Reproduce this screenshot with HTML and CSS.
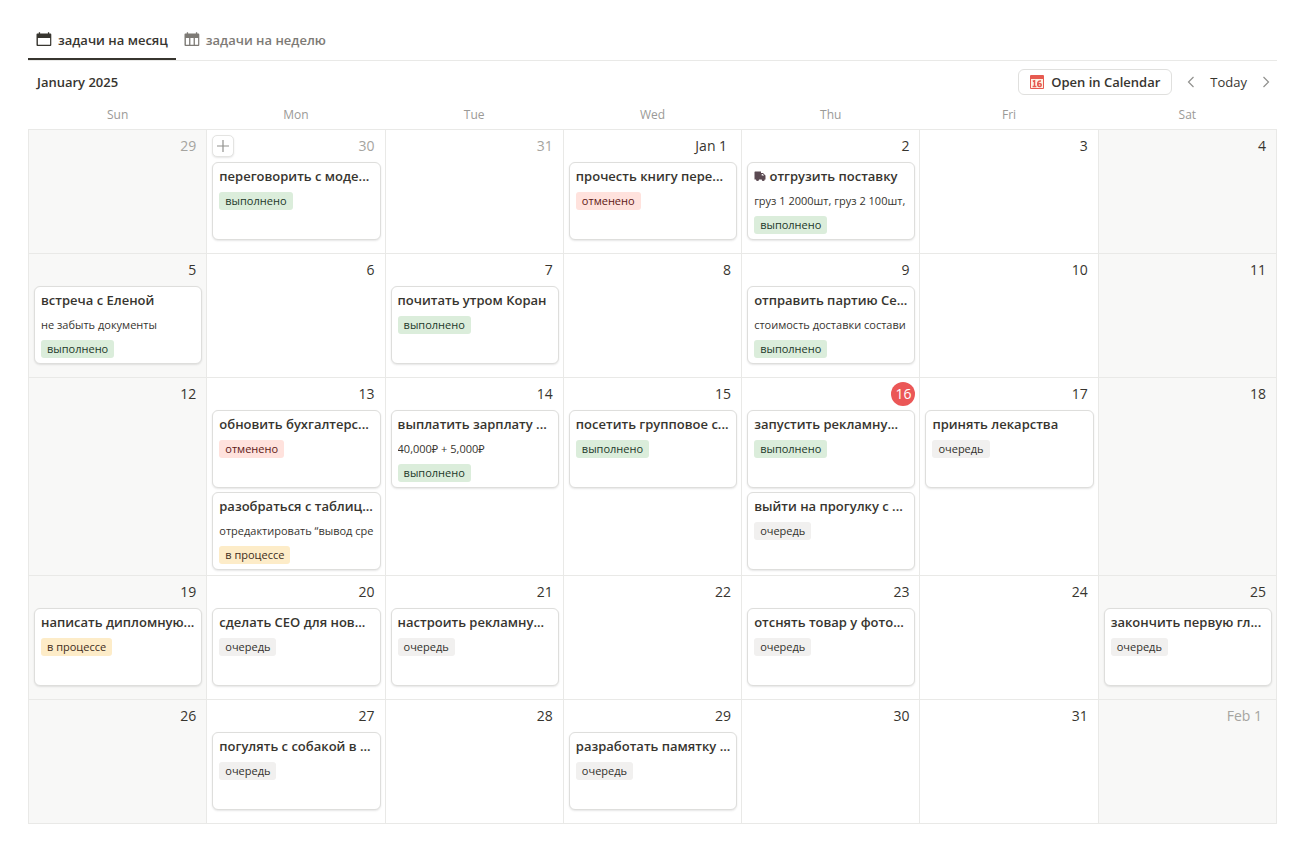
FILE: index.html
```
<!DOCTYPE html>
<html lang="ru">
<head>
    <meta charset="UTF-8">
    <meta name="viewport" content="width=device-width, initial-scale=1">
    <title>задачи на месяц</title>
    <link rel="stylesheet" href="styles.css">
</head>
<body>
    <nav class="tabs">
        <a href="#" class="tab active">
            <svg width="16" height="16" viewBox="0 0 16 16"><path fill="currentColor" fill-rule="evenodd" d="M2.800.3h1.300v1.300h7.800V.3h1.300v1.300h1.200q.9 0 .9.900v10.600q0 .9-.9.900H1.400q-.9 0-.9-.9V2.500q0-.9.9-.9h1.400zM1.900 6v6.200q0 .6.600.6h11q.6 0 .6-.6V6z"/></svg>
            задачи на месяц
        </a>
        <a href="#" class="tab">
            <svg width="16" height="16" viewBox="0 0 16 16"><path fill="currentColor" fill-rule="evenodd" d="M2.800.3h1.300v1.300h7.800V.3h1.300v1.300h1.200q.9 0 .9.900v10.600q0 .9-.9.900H1.400q-.9 0-.9-.9V2.500q0-.9.9-.9h1.400zM1.900 6v6.800h3.200V6zM6.400 6v6.800h3.200V6zM10.900 6v6.800h3.200V6z"/></svg>
            задачи на неделю
        </a>
    </nav>

    <header class="toolbar">
        <h2 class="month">January 2025</h2>
        <div class="controls">
            <button class="open-btn">
                <svg width="14" height="14" viewBox="0 0 14 14"><rect width="14" height="14" rx="1" fill="#e65a50"/><path fill="#fdf3e4" d="M1 4h12v9H1z"/><path fill="none" stroke="#e65a50" stroke-width="1.500" d="M2.800 6.300l1.700-.6v5.800M2.600 11.500h3.800M11 6q-3.300-.5-3.300 3 0 2.500 1.800 2.500T11.200 9.900q0-1.400-1.600-1.400T7.900 9.600"/></svg>
                Open in Calendar
            </button>
            <button class="nav-btn" aria-label="Previous month"><svg width="14" height="14" viewBox="0 0 14 14"><path d="M9.500 2L4.500 7l5 5"/></svg></button>
            <button class="today-btn">Today</button>
            <button class="nav-btn" aria-label="Next month"><svg width="14" height="14" viewBox="0 0 14 14"><path d="M4.500 2l5 5-5 5"/></svg></button>
        </div>
    </header>

    <table class="calendar">
        <thead>
            <tr><th>Sun</th><th>Mon</th><th>Tue</th><th>Wed</th><th>Thu</th><th>Fri</th><th>Sat</th></tr>
        </thead>
        <tbody>
            <tr>
                <td class="weekend other"><div class="day"><span>29</span></div></td>
                <td class="other">
                    <div class="day"><button class="add-btn" aria-label="Add task"><svg width="14" height="14" viewBox="0 0 14 14"><path d="M7 1v12M1 7h12"/></svg></button><span>30</span></div>
                    <div class="card"><h3>переговорить с моде...</h3><span class="tag green">выполнено</span></div>
                </td>
                <td class="other"><div class="day"><span>31</span></div></td>
                <td>
                    <div class="day named"><span>Jan 1</span></div>
                    <div class="card"><h3>прочесть книгу пере...</h3><span class="tag red">отменено</span></div>
                </td>
                <td>
                    <div class="day"><span>2</span></div>
                    <div class="card">
                        <h3><svg class="truck" width="12" height="12" viewBox="0 0 12 12"><path fill="#5b4a52" d="M1 1.500h6V3h2l2.500 2.500V9.500h-.8a1.500 1.500 0 0 1-3 0H5a1.500 1.500 0 0 1-3 0H.5V2z"/><path fill="#fff" d="M7.700 4h1l1.500 1.600H7.700z"/></svg> отгрузить поставку</h3>
                        <p>груз 1 2000шт, груз 2 100шт,</p>
                        <span class="tag green">выполнено</span>
                    </div>
                </td>
                <td><div class="day"><span>3</span></div></td>
                <td class="weekend"><div class="day"><span>4</span></div></td>
            </tr>
            <tr>
                <td class="weekend">
                    <div class="day"><span>5</span></div>
                    <div class="card"><h3>встреча с Еленой</h3><p>не забыть документы</p><span class="tag green">выполнено</span></div>
                </td>
                <td><div class="day"><span>6</span></div></td>
                <td>
                    <div class="day"><span>7</span></div>
                    <div class="card"><h3>почитать утром Коран</h3><span class="tag green">выполнено</span></div>
                </td>
                <td><div class="day"><span>8</span></div></td>
                <td>
                    <div class="day"><span>9</span></div>
                    <div class="card"><h3>отправить партию Се...</h3><p>стоимость доставки состави</p><span class="tag green">выполнено</span></div>
                </td>
                <td><div class="day"><span>10</span></div></td>
                <td class="weekend"><div class="day"><span>11</span></div></td>
            </tr>
            <tr>
                <td class="weekend"><div class="day"><span>12</span></div></td>
                <td>
                    <div class="day"><span>13</span></div>
                    <div class="card"><h3>обновить бухгалтерс...</h3><span class="tag red">отменено</span></div>
                    <div class="card"><h3>разобраться с таблиц...</h3><p>отредактировать “вывод сре</p><span class="tag yellow">в процессе</span></div>
                </td>
                <td>
                    <div class="day"><span>14</span></div>
                    <div class="card"><h3>выплатить зарплату ...</h3><p>40,000₽ + 5,000₽</p><span class="tag green">выполнено</span></div>
                </td>
                <td>
                    <div class="day"><span>15</span></div>
                    <div class="card"><h3>посетить групповое с...</h3><span class="tag green">выполнено</span></div>
                </td>
                <td>
                    <div class="day"><span class="today">16</span></div>
                    <div class="card"><h3>запустить рекламну...</h3><span class="tag green">выполнено</span></div>
                    <div class="card"><h3>выйти на прогулку с ...</h3><span class="tag gray">очередь</span></div>
                </td>
                <td>
                    <div class="day"><span>17</span></div>
                    <div class="card"><h3>принять лекарства</h3><span class="tag gray">очередь</span></div>
                </td>
                <td class="weekend"><div class="day"><span>18</span></div></td>
            </tr>
            <tr>
                <td class="weekend">
                    <div class="day"><span>19</span></div>
                    <div class="card"><h3>написать дипломную...</h3><span class="tag yellow">в процессе</span></div>
                </td>
                <td>
                    <div class="day"><span>20</span></div>
                    <div class="card"><h3>сделать СЕО для нов...</h3><span class="tag gray">очередь</span></div>
                </td>
                <td>
                    <div class="day"><span>21</span></div>
                    <div class="card"><h3>настроить рекламну...</h3><span class="tag gray">очередь</span></div>
                </td>
                <td><div class="day"><span>22</span></div></td>
                <td>
                    <div class="day"><span>23</span></div>
                    <div class="card"><h3>отснять товар у фото...</h3><span class="tag gray">очередь</span></div>
                </td>
                <td><div class="day"><span>24</span></div></td>
                <td class="weekend">
                    <div class="day"><span>25</span></div>
                    <div class="card"><h3>закончить первую гл...</h3><span class="tag gray">очередь</span></div>
                </td>
            </tr>
            <tr>
                <td class="weekend"><div class="day"><span>26</span></div></td>
                <td>
                    <div class="day"><span>27</span></div>
                    <div class="card"><h3>погулять с собакой в ...</h3><span class="tag gray">очередь</span></div>
                </td>
                <td><div class="day"><span>28</span></div></td>
                <td>
                    <div class="day"><span>29</span></div>
                    <div class="card"><h3>разработать памятку ...</h3><span class="tag gray">очередь</span></div>
                </td>
                <td><div class="day"><span>30</span></div></td>
                <td><div class="day"><span>31</span></div></td>
                <td class="weekend other"><div class="day named"><span>Feb 1</span></div></td>
            </tr>
        </tbody>
    </table>
</body>
</html>
```
FILE: styles.css
```
* {
    box-sizing: border-box;
}
body {
    font-family: "Open Sans", "Noto Sans", sans-serif;
    font-size: 14px;
    line-height: 20px;
    margin: 0;
    padding: 20px 28px 28px;
    color: #37352f;
    background: white;
}
button {
    font: inherit;
    color: inherit;
    background: white;
    border: none;
    padding: 0;
    cursor: pointer;
}
svg {
    flex-shrink: 0;
}
.tabs {
    display: flex;
    height: 41px;
    border-bottom: 1px solid #e9e9e7;
}
.tab {
    display: flex;
    align-items: center;
    gap: 6px;
    height: 40px;
    padding: 0 8px;
    font-size: 13px;
    font-weight: 600;
    color: #7d7a75;
    text-decoration: none;
    white-space: nowrap;
}
.tab.active {
    color: #37352f;
    border-bottom: 2px solid #37352f;
    padding-top: 2px;
}
.toolbar {
    display: flex;
    justify-content: space-between;
    align-items: center;
    height: 42px;
    padding: 0 4px 0 9px;
}
.month {
    margin: 0;
    font-size: 13px;
    font-weight: 600;
}
.controls {
    display: flex;
    align-items: center;
    gap: 12px;
}
.open-btn {
    display: flex;
    align-items: center;
    gap: 7px;
    height: 26px;
    padding: 0 11px;
    border: 1px solid #e0e0de;
    border-radius: 6px;
    font-size: 13px;
    font-weight: 600;
}
.today-btn {
    font-size: 13px;
}
.nav-btn {
    display: flex;
}
.nav-btn path,
.add-btn path {
    fill: none;
    stroke: #91918e;
    stroke-width: 1.2;
}
.calendar {
    width: 100%;
    table-layout: fixed;
    border-collapse: collapse;
}
.calendar th {
    height: 26px;
    padding: 0 0 2px;
    font-size: 12px;
    font-weight: 400;
    color: #9b9a97;
}
.calendar td {
    height: 124px;
    padding: 4px 4px 1px 5px;
    border: 1px solid #e9e9e7;
    vertical-align: top;
}
.calendar .weekend {
    background: #f8f8f7;
}
.day {
    display: flex;
    justify-content: flex-end;
    align-items: center;
    height: 24px;
    margin-bottom: 4px;
    padding-right: 6px;
}
.day.named {
    padding-right: 10px;
}
.other .day {
    color: #a5a4a0;
}
.add-btn {
    display: flex;
    align-items: center;
    justify-content: center;
    width: 22px;
    height: 22px;
    margin-right: auto;
    border: 1px solid #e4e4e2;
    border-radius: 5px;
    box-shadow: 0 1px 2px rgba(0, 0, 0, 0.1);
}
.today {
    width: 24px;
    height: 24px;
    margin-right: -6px;
    border-radius: 50%;
    background: #eb5757;
    color: white;
    line-height: 24px;
    text-align: center;
}
.card {
    height: 78px;
    margin-bottom: 4px;
    padding: 3px 6px;
    background: white;
    border: 1px solid #dededc;
    border-radius: 6px;
    box-shadow: 0 1px 2px rgba(0, 0, 0, 0.1);
    overflow: hidden;
}
.card h3 {
    margin: 0 0 6px;
    font-size: 13px;
    font-weight: 600;
    line-height: 20px;
    white-space: nowrap;
}
.card p {
    margin: 0 0 6px;
    font-size: 11px;
    line-height: 18px;
    white-space: nowrap;
    overflow: hidden;
}
.tag {
    display: block;
    width: fit-content;
    padding: 0 6px;
    border-radius: 3px;
    font-size: 11px;
    line-height: 18px;
    white-space: nowrap;
}
.truck {
    vertical-align: -1px;
}
.green {
    background: #dbeddb;
    color: #1c3829;
}
.red {
    background: #ffe2dd;
    color: #5d1715;
}
.yellow {
    background: #fdecc8;
    color: #402c1b;
}
.gray {
    background: #f1f0ef;
    color: #32302c;
}
```
